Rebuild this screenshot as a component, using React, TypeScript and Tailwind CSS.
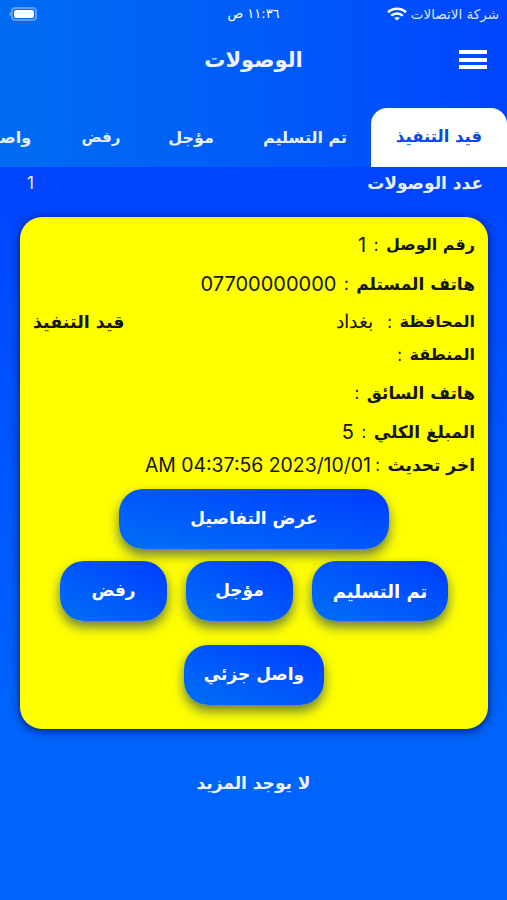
const font = '[font-family:"DejaVu_Sans",sans-serif]'

function InfoRow({ label, value, className, valueClass }: { label: string; value?: string; className?: string; valueClass?: string }) {
  return (
    <div className={`flex items-center gap-[7px] font-bold leading-[26px] text-[#161616] ${className ?? 'text-[17px]'}`}>
      <span>{label}</span>
      <span className="text-[17px] font-normal">:</span>
      {value && <span dir="ltr" className={`font-normal [font-family:Inter,sans-serif] ${valueClass ?? 'text-[20px]'}`}>{value}</span>}
    </div>
  )
}

function ActionButton({ label, className }: { label: string; className: string }) {
  return (
    <button
      type="button"
      className={`h-[60px] rounded-[24px] bg-gradient-to-bl from-[#0038ff] to-[#006ef6] font-bold text-white shadow-[0_6px_12px_rgba(0,40,110,0.6)] ${className}`}
    >
      {label}
    </button>
  )
}

function WifiIcon() {
  return (
    <svg viewBox="0 0 20 14" className="h-[14px] w-[20px]" fill="none" stroke="white" strokeWidth="2.6">
      <path d="M1 5.2C6 0.6 14 0.6 19 5.2" />
      <path d="M4.2 8.6C7.4 5.7 12.6 5.7 15.8 8.6" />
      <path d="M10 13.6L7.2 10.9C8.8 9.6 11.2 9.6 12.8 10.9Z" fill="white" stroke="none" />
    </svg>
  )
}

export default function App() {
  return (
    <div dir="rtl" className={`flex h-[900px] w-[507px] flex-col overflow-hidden bg-gradient-to-b from-[#0044ff] from-20% to-[#0064fb] to-80% ${font}`}>
      <div className="bg-gradient-to-l from-[#0044ff] via-[#005cf8] to-[#006cf2]">
        <div className="flex h-[28px] items-center justify-between pl-2 pr-2 text-white">
          <div className="flex w-[150px] items-center gap-1">
            <span className="text-[13.5px] whitespace-nowrap text-[#dbe8ff]">شركة الاتصالات</span>
            <WifiIcon />
          </div>
          <span className="text-[13px]">١١:٣٦ ص</span>
          <div className="flex w-[150px] items-center justify-end">
            <div className="flex h-[14px] w-[26px] items-center justify-center rounded-[4px] border-2 border-[#5a9cff] p-[1px]">
              <div className="h-full w-full rounded-[2px] bg-white" />
            </div>
            <span className="ml-px h-[4px] w-[2px] rounded-l-full bg-[#5a9cff]" />
          </div>
        </div>

        <div className="relative flex h-[62px] items-center justify-center pt-[3px]">
          <h1 className="text-[21px] font-bold text-[#eef4ff]">الوصولات</h1>
          <div className="absolute right-[20px] top-[22px] flex w-[28px] flex-col gap-[3.5px]">
            <span className="h-1 bg-white" />
            <span className="h-1 bg-white" />
            <span className="h-1 bg-white" />
          </div>
        </div>

        <div className="mt-[18px] flex h-[59px] items-stretch overflow-hidden text-[16px] font-bold text-[#e6efff]">
          <div className="flex w-[136px] shrink-0 items-center justify-center rounded-t-[16px] bg-white text-[16.5px] text-[#0a48e8]">قيد التنفيذ</div>
          <div className="flex w-[132px] shrink-0 items-center justify-center">تم التسليم</div>
          <div className="flex w-[96px] shrink-0 items-center justify-center">مؤجل</div>
          <div className="flex w-[84px] shrink-0 items-center justify-center text-[15px]">رفض</div>
          <div className="flex w-[150px] shrink-0 items-center justify-center">واصل جزئي</div>
        </div>
      </div>

      <div className="flex h-[33px] items-center justify-between pl-[27px] pr-[24px] text-[17px] font-bold text-[#e6efff] whitespace-nowrap">
        <span>عدد الوصولات</span>
        <span className="font-normal text-[17px] [font-family:Inter,sans-serif]">1</span>
      </div>

      <div className="ml-[20px] mr-[19px] mt-[17px] flex h-[512px] flex-col rounded-[22px] bg-[#ffff00] px-[13px] pt-[15px] shadow-[0_2px_10px_rgba(0,20,90,0.9)]">
        <InfoRow label="رقم الوصل" value="1" className="text-[16px]" />
        <InfoRow label="هاتف المستلم" value="07700000000" className="mt-[13px] text-[17px]" />
        <div className="mt-[12px] flex items-center justify-between">
          <InfoRow label="المحافظة" value="بغداد" className="text-[16px]" valueClass="mr-[7px] text-[19px]" />
          <span className="text-[17.5px] font-bold leading-[26px] text-[#161616]">قيد التنفيذ</span>
        </div>
        <InfoRow label="المنطقة" className="mt-[7px] text-[16px]" />
        <InfoRow label="هاتف السائق" className="mt-[12px] text-[17px]" />
        <InfoRow label="المبلغ الكلي" value="5" className="mt-[13px] text-[17px]" />
        <InfoRow label="اخر تحديث" value="AM 04:37:56 2023/10/01" className="mt-[7px] text-[17px]" valueClass="-mr-[3px] text-[19.4px]" />

        <div className="mt-[11px] flex justify-center">
          <ActionButton label="عرض التفاصيل" className="w-[270px] text-[17px]" />
        </div>
        <div className="mt-[12px] flex justify-center gap-[19px]">
          <ActionButton label="تم التسليم" className="w-[136px] text-[18px]" />
          <ActionButton label="مؤجل" className="w-[107px] text-[17px]" />
          <ActionButton label="رفض" className="w-[107px] text-[17px]" />
        </div>
        <div className="mt-[24px] flex justify-center">
          <ActionButton label="واصل جزئي" className="w-[140px] text-[17px]" />
        </div>
      </div>

      <p className="mt-[42px] text-center text-[17px] font-bold text-[#eef4ff]">لا يوجد المزيد</p>
    </div>
  )
}
